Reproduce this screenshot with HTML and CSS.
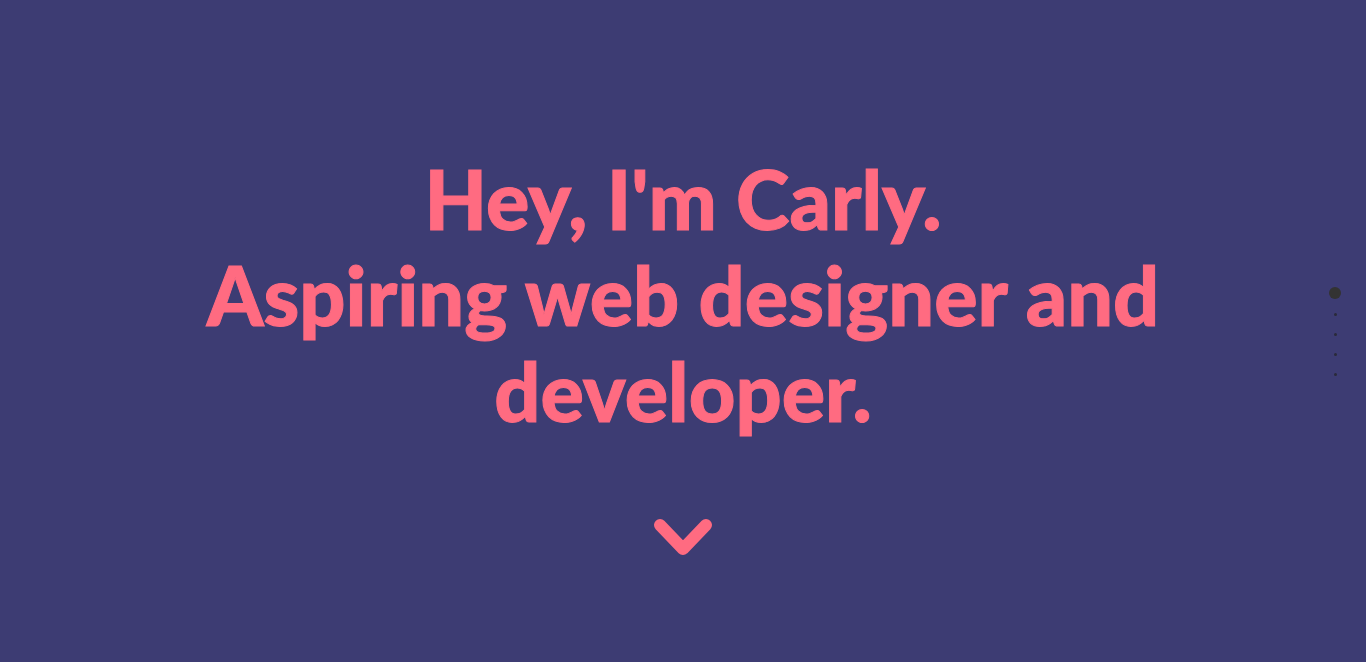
FILE: index.html
```html
<!DOCTYPE html>
<html>
<head>
<meta charset="utf-8">
<link rel="stylesheet" href="styles.css">
</head>
<body>
<section class="hero">
  <h1 class="title">Hey, I'm Carly.<br>Aspiring web designer and developer.</h1>
  <a class="down" href="#">
    <svg width="60" height="40" viewBox="0 0 60 40"><path d="M7 7 L30 31 L53 7" fill="none" stroke="#ff6b81" stroke-width="12" stroke-linecap="round" stroke-linejoin="round"/></svg>
  </a>
</section>
<nav class="dots">
  <span class="dot active"></span>
  <span class="dot"></span>
  <span class="dot"></span>
  <span class="dot"></span>
  <span class="dot"></span>
</nav>
</body>
</html>
```
FILE: styles.css
```css
html, body { margin: 0; padding: 0; }
body {
  background: #3d3c73;
  font-family: "Lato Black", Lato, "Liberation Sans", sans-serif;
  height: 662px;
  overflow: hidden;
}
.hero {
  height: 662px;
  display: flex;
  flex-direction: column;
  align-items: center;
  padding-top: 151px;
  box-sizing: border-box;
}
.title {
  margin: 0;
  width: 1000px;
  text-align: center;
  color: #ff6b81;
  font-weight: 900;
  font-size: 81px;
  line-height: 96px;
  -webkit-text-stroke: 1px #ff6b81;
}
.down {
  display: block;
  margin-top: 79px;
  line-height: 0;
}
.dots {
  position: absolute;
  right: 25px;
  top: 287px;
  display: flex;
  flex-direction: column;
  align-items: center;
  gap: 17px;
}
.dot {
  width: 3px;
  height: 3px;
  border-radius: 50%;
  background: #2a2a3a;
}
.dot.active {
  width: 12px;
  height: 12px;
  background: #333;
  margin-bottom: -3px;
}
```
